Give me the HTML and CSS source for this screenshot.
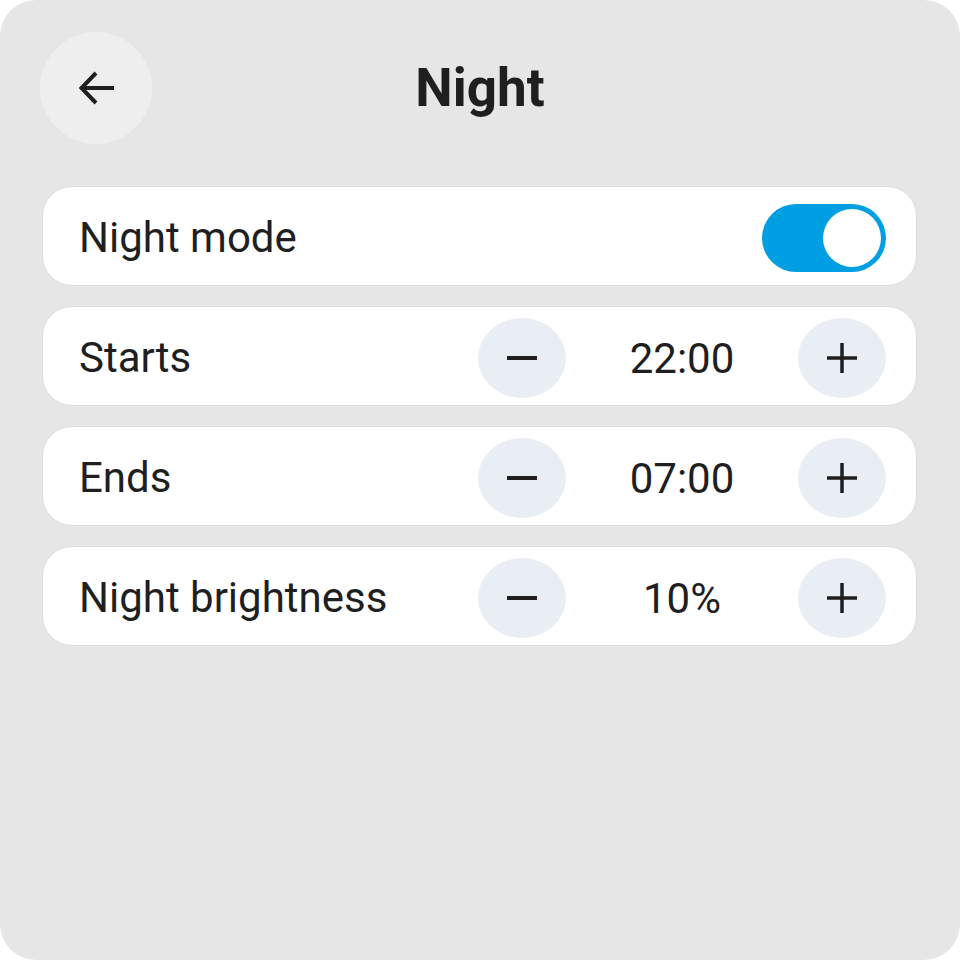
FILE: index.html
```html
<!DOCTYPE html>
<html lang="en">
<head>
    <meta charset="UTF-8">
    <meta name="viewport" content="width=device-width, initial-scale=1.0">
    <title>Night</title>
    <link rel="stylesheet" href="styles.css">
</head>
<body>
    <div class="screen">
        <div class="header">
            <button class="back" aria-label="Back">
                <svg width="40" height="40" viewBox="0 0 40 40">
                    <path d="M38 20H6M20 5L5.5 20L20 35" fill="none" stroke="#1f1f1f" stroke-width="4"/>
                </svg>
            </button>
            <h1>Night</h1>
            <div></div>
        </div>

        <div class="list">
            <div class="row">
                <span class="label">Night mode</span>
                <div class="toggle on"><div class="knob"></div></div>
            </div>

            <div class="row">
                <span class="label">Starts</span>
                <div class="stepper">
                    <button class="step" aria-label="Earlier">
                        <svg width="32" height="32" viewBox="0 0 32 32"><path d="M1 16H31" stroke="#1f1f1f" stroke-width="4"/></svg>
                    </button>
                    <span class="value">22:00</span>
                    <button class="step" aria-label="Later">
                        <svg width="32" height="32" viewBox="0 0 32 32"><path d="M1 16H31M16 1V31" stroke="#1f1f1f" stroke-width="3.5"/></svg>
                    </button>
                </div>
            </div>

            <div class="row">
                <span class="label">Ends</span>
                <div class="stepper">
                    <button class="step" aria-label="Earlier">
                        <svg width="32" height="32" viewBox="0 0 32 32"><path d="M1 16H31" stroke="#1f1f1f" stroke-width="4"/></svg>
                    </button>
                    <span class="value">07:00</span>
                    <button class="step" aria-label="Later">
                        <svg width="32" height="32" viewBox="0 0 32 32"><path d="M1 16H31M16 1V31" stroke="#1f1f1f" stroke-width="3.5"/></svg>
                    </button>
                </div>
            </div>

            <div class="row">
                <span class="label">Night brightness</span>
                <div class="stepper">
                    <button class="step" aria-label="Darker">
                        <svg width="32" height="32" viewBox="0 0 32 32"><path d="M1 16H31" stroke="#1f1f1f" stroke-width="4"/></svg>
                    </button>
                    <span class="value">10%</span>
                    <button class="step" aria-label="Brighter">
                        <svg width="32" height="32" viewBox="0 0 32 32"><path d="M1 16H31M16 1V31" stroke="#1f1f1f" stroke-width="3.5"/></svg>
                    </button>
                </div>
            </div>
        </div>
    </div>
</body>
</html>
```

FILE: styles.css
```css
body {
    margin: 0;
    background: #ffffff;
    font-family: Roboto, 'Liberation Sans', sans-serif;
    color: #1f1f1f;
}

.screen {
    width: 960px;
    height: 960px;
    box-sizing: border-box;
    background: #e6e6e6;
    border-radius: 36px;
    padding: 32px 43px 0 42px;
}

.header {
    display: grid;
    grid-template-columns: 112px 1fr 112px;
    align-items: center;
    height: 112px;
    margin: 0 -3px 0 -2px;
}

.header h1 {
    margin: 0;
    text-align: center;
    font-size: 53px;
    font-weight: 700;
}

.back {
    width: 112px;
    height: 112px;
    border: none;
    border-radius: 50%;
    background: #eeeeee;
    display: flex;
    align-items: center;
    justify-content: center;
    padding: 0;
    cursor: pointer;
}

.list {
    margin-top: 42px;
    display: flex;
    flex-direction: column;
    gap: 20px;
}

.row {
    height: 100px;
    box-sizing: border-box;
    background: #ffffff;
    border: 1px solid #dddddd;
    border-radius: 30px;
    display: flex;
    align-items: center;
    justify-content: space-between;
    padding: 4px 30px 0 36px;
}

.label {
    font-size: 42px;
    margin-top: -2px;
}

.toggle {
    width: 124px;
    height: 68px;
    border-radius: 34px;
    background: #bdbdbd;
    position: relative;
}

.toggle.on {
    background: #009fe3;
}

.knob {
    position: absolute;
    top: 5px;
    right: 5px;
    width: 58px;
    height: 58px;
    border-radius: 50%;
    background: #ffffff;
}

.stepper {
    display: flex;
    align-items: center;
}

.step {
    width: 88px;
    height: 80px;
    border: none;
    border-radius: 50%;
    background: #e9eef5;
    display: flex;
    align-items: center;
    justify-content: center;
    padding: 0;
    cursor: pointer;
}

.value {
    width: 232px;
    text-align: center;
    font-size: 42px;
}
```
